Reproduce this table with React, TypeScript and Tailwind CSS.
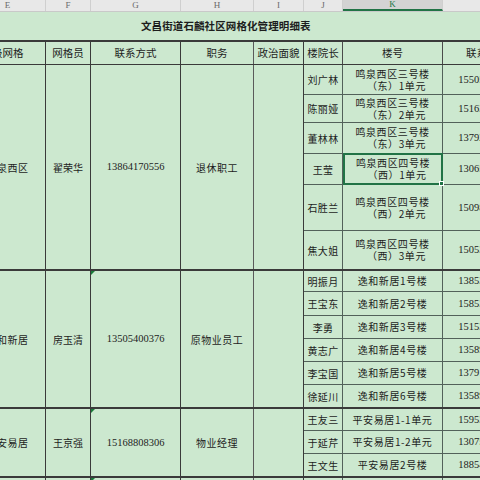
import React from 'react';

const cjk = { fontFamily: '"Noto Sans CJK SC", "Noto Sans", sans-serif' };
const num = { fontFamily: '"Liberation Serif", "Noto Sans CJK SC", serif' };

const cols = [
  { id: 'E', w: 'w-[76px]' },
  { id: 'F', w: 'w-[45px]' },
  { id: 'G', w: 'w-[90px]' },
  { id: 'H', w: 'w-[73px]' },
  { id: 'I', w: 'w-[50px]' },
  { id: 'J', w: 'w-[39px]' },
  { id: 'K', w: 'w-[100px]' },
  { id: 'L', w: 'w-[88px]' },
];

const groups = [
  {
    area: '鸣泉西区',
    name: '翟荣华',
    phone: '13864170556',
    job: '退休职工',
    rows: [
      ['刘广林', '鸣泉西区三号楼', '（东）1单元', '15505381247'],
      ['陈丽娅', '鸣泉西区三号楼', '（东）2单元', '15163816092'],
      ['董林林', '鸣泉西区三号楼', '（东）3单元', '13792163385'],
      ['王莹', '鸣泉西区四号楼', '（西）1单元', '13065451170'],
      ['石胜兰', '鸣泉西区四号楼', '（西）2单元', '15098614463'],
      ['焦大姐', '鸣泉西区四号楼', '（西）3单元', '15053827791'],
    ],
  },
  {
    area: '逸和新居',
    name: '房玉清',
    phone: '13505400376',
    job: '原物业员工',
    rows: [
      ['明振月', '逸和新居1号楼', '', '13853802216'],
      ['王宝东', '逸和新居2号楼', '', '15853813395'],
      ['李勇', '逸和新居3号楼', '', '15153852064'],
      ['黄志广', '逸和新居4号楼', '', '13589611782'],
      ['李宝国', '逸和新居5号楼', '', '13791640528'],
      ['徐延川', '逸和新居6号楼', '', '13589675513'],
    ],
  },
  {
    area: '平安易居',
    name: '王京强',
    phone: '15168808306',
    job: '物业经理',
    rows: [
      ['王友三', '平安易居1-1单元', '', '15953847720'],
      ['于延芹', '平安易居1-2单元', '', '13075441968'],
      ['王文生', '平安易居2号楼', '', '18854026631'],
    ],
  },
];

const heights = ['h-[30px]', 'h-[28px]', 'h-[31px]', 'h-[31px]', 'h-[46px]', 'h-[38px]', 'h-[21px]', 'h-[24px]', 'h-[23px]', 'h-[23px]', 'h-[23px]', 'h-[22px]', 'h-[22px]', 'h-[23px]', 'h-[22px]'];

function Tick() {
  return <div className="absolute left-0 top-0 w-0 h-0 border-t-[4px] border-r-[4px] border-t-[#1a7a3a] border-r-transparent" />;
}

export default function App() {
  let idx = 0;
  return (
    <div className="w-[480px] h-[480px] overflow-hidden bg-[#cce8cf] text-[#1d1d1d]" style={cjk}>
      <div className="-ml-[30px] w-[561px]">
        {/* column letters */}
        <div className="flex h-[12px] bg-[#e8e8e8] border-b border-[#c9c9c9]">
          {cols.map((c) => (
            <div
              key={c.id}
              className={`${c.w} flex items-center justify-center text-[9px] leading-none border-r border-[#cfcfcf] ${
                c.id === 'K' ? 'bg-[#d3d3d3] text-[#217346] border-b-2 border-b-[#217346]' : 'text-[#6b6b6b]'
              }`}
              style={num}
            >
              {c.id}
            </div>
          ))}
        </div>

        {/* title */}
        <div className="h-[30px] flex items-center pl-[171px] border-b-2 border-[#3a3a3a]">
          <span className="text-[10.5px] font-bold tracking-[0.1px]">文昌街道石麟社区网格化管理明细表</span>
        </div>

        {/* header */}
        <div className="flex h-[23px] border-b border-[#3a3a3a] text-[10.5px]">
          <div className="w-[76px] flex items-center justify-center pr-[10px] border-r border-[#3a3a3a]">二级网格</div>
          <div className="w-[45px] flex items-center justify-center border-r border-[#3a3a3a]">网格员</div>
          <div className="w-[90px] flex items-center justify-center border-r border-[#3a3a3a]">联系方式</div>
          <div className="w-[73px] flex items-center justify-center border-r border-[#5a5a5a]">职务</div>
          <div className="w-[50px] flex items-center justify-center border-r border-[#3a3a3a]">政治面貌</div>
          <div className="w-[39px] flex items-center justify-center border-r border-[#4a4a4a]">楼院长</div>
          <div className="w-[100px] flex items-center justify-center border-r border-[#4a4a4a]">楼号</div>
          <div className="w-[88px] flex items-center justify-center">联系方式</div>
        </div>

        {groups.map((g, gi) => (
          <div key={g.area} className="flex border-b-2 border-[#3a3a3a] text-[10px]">
            <div className="w-[76px] flex items-center justify-center border-r border-[#3a3a3a] tracking-[0.5px]">{g.area}</div>
            <div className="w-[45px] flex items-center justify-center border-r border-[#3a3a3a]">{g.name}</div>
            <div className="relative w-[90px] flex items-center justify-center border-r border-[#3a3a3a] text-[10.5px]" style={num}>
              {gi > 0 && <Tick />}
              {g.phone}
            </div>
            <div className="w-[73px] flex items-center justify-center border-r border-[#5a5a5a] tracking-[0.5px]">{g.job}</div>
            <div className="w-[50px] border-r border-[#3a3a3a]" />
            <div className="flex flex-col">
              {g.rows.map((r, ri) => {
                const h = heights[idx++];
                const sel = gi === 0 && ri === 3;
                const last = ri === g.rows.length - 1;
                return (
                  <div key={r[0]} className={`flex ${h} ${last ? '' : 'border-b border-[#52615a]'}`}>
                    <div className="w-[39px] flex items-center justify-center border-r border-[#52615a] tracking-[0.3px]">{r[0]}</div>
                    <div
                      className={`relative w-[100px] flex flex-col items-center justify-center leading-[12px] tracking-[0.6px] ${
                        sel ? 'border-2 border-[#217346] -my-[1px] z-10' : 'border-r border-[#52615a]'
                      }`}
                    >
                      <span>{r[1]}</span>
                      {r[2] && <span className="pl-[8px]">{r[2]}</span>}
                      {sel && <div className="absolute -right-[3px] -bottom-[3px] w-[5px] h-[5px] bg-[#217346] border border-white" />}
                    </div>
                    <div className="w-[88px] flex items-center justify-center text-[10.5px]" style={num}>
                      {r[3]}
                    </div>
                  </div>
                );
              })}
            </div>
          </div>
        ))}

        {/* partial next row */}
        <div className="flex h-[22px]">
          <div className="w-[76px] border-r border-[#3a3a3a]" />
          <div className="w-[45px] border-r border-[#3a3a3a]" />
          <div className="relative w-[90px] border-r border-[#3a3a3a]">
            <Tick />
          </div>
          <div className="w-[73px] border-r border-[#5a5a5a]" />
          <div className="w-[50px] border-r border-[#3a3a3a]" />
          <div className="w-[39px] border-r border-[#52615a]" />
          <div className="w-[100px] border-r border-[#52615a]" />
          <div className="w-[88px]" />
        </div>
      </div>
    </div>
  );
}
